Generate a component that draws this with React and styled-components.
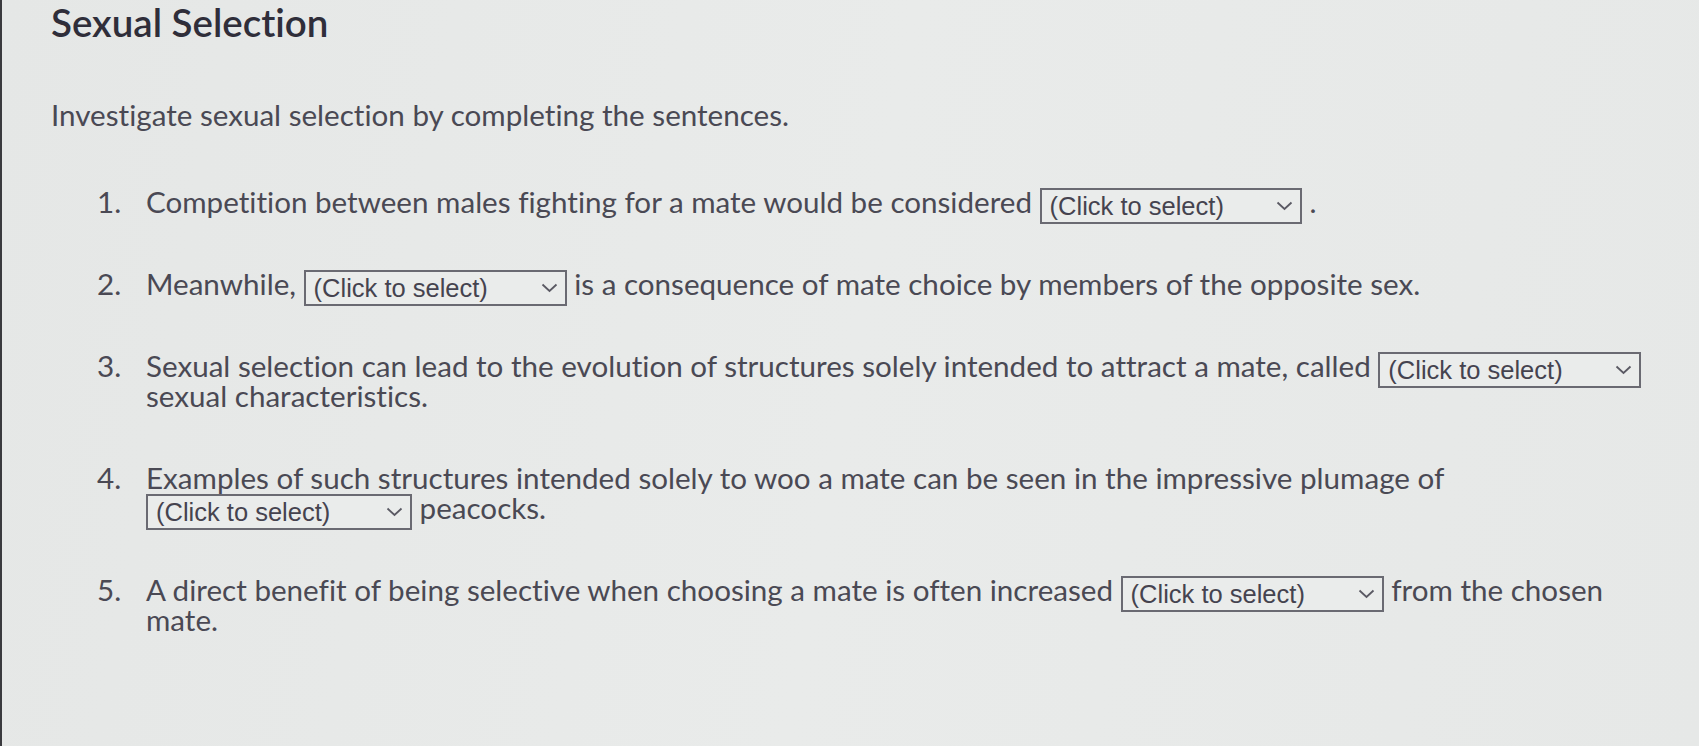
import styled, { createGlobalStyle } from "styled-components";

const GlobalStyle = createGlobalStyle`
  html, body {
    margin: 0;
    padding: 0;
    background: #e7e9e8;
  }
`;

const items = [
  {
    n: "1.",
    before: "Competition between males fighting for a mate would be considered",
    w: 262,
    after: ".",
  },
  {
    n: "2.",
    before: "Meanwhile,",
    w: 263,
    after: "is a consequence of mate choice by members of the opposite sex.",
  },
  {
    n: "3.",
    before: "Sexual selection can lead to the evolution of structures solely intended to attract a mate, called",
    w: 263,
    after: "sexual characteristics.",
  },
  {
    n: "4.",
    before: "Examples of such structures intended solely to woo a mate can be seen in the impressive plumage of",
    w: 266,
    after: "peacocks.",
  },
  {
    n: "5.",
    before: "A direct benefit of being selective when choosing a mate is often increased",
    w: 263,
    after: "from the chosen mate.",
  },
];

function Chevron() {
  return (
    <svg width="17" height="10" viewBox="0 0 17 10">
      <path d="M1.5 1.5 L8.5 8 L15.5 1.5" fill="none" stroke="#5a5963" strokeWidth="1.8" />
    </svg>
  );
}

export default function App() {
  return (
    <Page>
      <GlobalStyle />
      <Title>Sexual Selection</Title>
      <Intro>Investigate sexual selection by completing the sentences.</Intro>
      <List>
        {items.map((item) => (
          <Item key={item.n}>
            <Num>{item.n}</Num>
            <Sentence>
              {item.before}{" "}
              <Dropdown $w={item.w}>
                <span>(Click to select)</span>
                <Chevron />
              </Dropdown>
              {item.after === "." ? <Period>.</Period> : " " + item.after}
            </Sentence>
          </Item>
        ))}
      </List>
    </Page>
  );
}

const Page = styled.div`
  min-height: 746px;
  box-sizing: border-box;
  padding: 0 40px 0 49px;
  border-left: 2px solid #3a3a3e;
  background: linear-gradient(100deg, #e5e7e6 0%, #e9ebea 50%, #e6e8e7 100%);
  font-family: Lato, "Liberation Sans", sans-serif;
  font-variant-ligatures: none;
  color: #4a4954;
`;

const Title = styled.h1`
  margin: 0;
  padding-top: 1px;
  font-size: 38.5px;
  line-height: 42px;
  font-weight: 600;
  color: #2f2e3a;
`;

const Intro = styled.p`
  margin: 52px 0 0;
  font-size: 29.6px;
  line-height: 40px;
`;

const List = styled.div`
  margin-top: 52px;
  display: flex;
  flex-direction: column;
  gap: 52px;
`;

const Item = styled.div`
  display: grid;
  grid-template-columns: 49px 1fr;
  padding-left: 46px;
  font-size: 29.6px;
  line-height: 30px;
`;

const Num = styled.span``;

const Sentence = styled.div``;

const Period = styled.span`
  margin-left: 8px;
`;

const Dropdown = styled.span`
  display: inline-flex;
  align-items: center;
  justify-content: space-between;
  box-sizing: border-box;
  width: ${(p) => p.$w}px;
  height: 36px;
  margin: -7px 0;
  padding: 0 7px 0 8px;
  vertical-align: middle;
  border: 2px solid #6a6a72;
  background: #eaeceb;
  font-family: "Liberation Sans", Arial, sans-serif;
  font-size: 25.5px;
  color: #45434f;
  cursor: pointer;
`;
